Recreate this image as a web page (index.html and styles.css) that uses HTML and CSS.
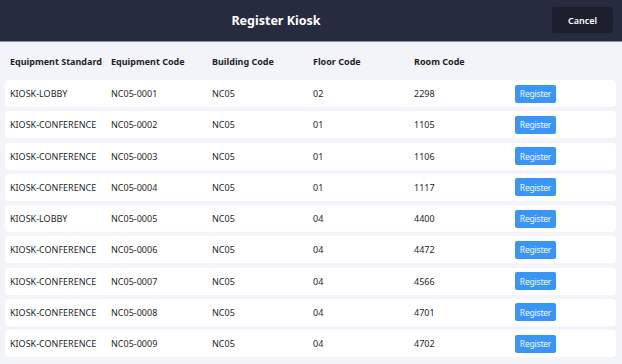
FILE: index.html
```html
<!DOCTYPE html>
<html lang="en">
<head>
  <meta charset="UTF-8">
  <title>Register Kiosk</title>
  <link rel="stylesheet" href="styles.css">
</head>
<body>
  <div class="topbar">
    <h3 class="title">Register Kiosk</h3>
    <button class="cancel-btn">Cancel</button>
  </div>
  <div class="content">
    <div class="head-row">
      <div class="cell">Equipment Standard</div>
      <div class="cell">Equipment Code</div>
      <div class="cell">Building Code</div>
      <div class="cell">Floor Code</div>
      <div class="cell">Room Code</div>
      <div class="cell"></div>
    </div>
    <div class="kiosk-row">
      <div class="cell">KIOSK-LOBBY</div>
      <div class="cell">NC05-0001</div>
      <div class="cell">NC05</div>
      <div class="cell">02</div>
      <div class="cell">2298</div>
      <div class="cell"><button class="register-btn">Register</button></div>
    </div>
    <div class="kiosk-row">
      <div class="cell">KIOSK-CONFERENCE</div>
      <div class="cell">NC05-0002</div>
      <div class="cell">NC05</div>
      <div class="cell">01</div>
      <div class="cell">1105</div>
      <div class="cell"><button class="register-btn">Register</button></div>
    </div>
    <div class="kiosk-row">
      <div class="cell">KIOSK-CONFERENCE</div>
      <div class="cell">NC05-0003</div>
      <div class="cell">NC05</div>
      <div class="cell">01</div>
      <div class="cell">1106</div>
      <div class="cell"><button class="register-btn">Register</button></div>
    </div>
    <div class="kiosk-row">
      <div class="cell">KIOSK-CONFERENCE</div>
      <div class="cell">NC05-0004</div>
      <div class="cell">NC05</div>
      <div class="cell">01</div>
      <div class="cell">1117</div>
      <div class="cell"><button class="register-btn">Register</button></div>
    </div>
    <div class="kiosk-row">
      <div class="cell">KIOSK-LOBBY</div>
      <div class="cell">NC05-0005</div>
      <div class="cell">NC05</div>
      <div class="cell">04</div>
      <div class="cell">4400</div>
      <div class="cell"><button class="register-btn">Register</button></div>
    </div>
    <div class="kiosk-row">
      <div class="cell">KIOSK-CONFERENCE</div>
      <div class="cell">NC05-0006</div>
      <div class="cell">NC05</div>
      <div class="cell">04</div>
      <div class="cell">4472</div>
      <div class="cell"><button class="register-btn">Register</button></div>
    </div>
    <div class="kiosk-row">
      <div class="cell">KIOSK-CONFERENCE</div>
      <div class="cell">NC05-0007</div>
      <div class="cell">NC05</div>
      <div class="cell">04</div>
      <div class="cell">4566</div>
      <div class="cell"><button class="register-btn">Register</button></div>
    </div>
    <div class="kiosk-row">
      <div class="cell">KIOSK-CONFERENCE</div>
      <div class="cell">NC05-0008</div>
      <div class="cell">NC05</div>
      <div class="cell">04</div>
      <div class="cell">4701</div>
      <div class="cell"><button class="register-btn">Register</button></div>
    </div>
    <div class="kiosk-row">
      <div class="cell">KIOSK-CONFERENCE</div>
      <div class="cell">NC05-0009</div>
      <div class="cell">NC05</div>
      <div class="cell">04</div>
      <div class="cell">4702</div>
      <div class="cell"><button class="register-btn">Register</button></div>
    </div>
  </div>
</body>
</html>
```

FILE: styles.css
```css
body {
  margin: 0;
  background-color: #f3f4f9;
  font-family: "Noto Sans", "Open Sans", sans-serif;
  color: #1d1f27;
}
.topbar {
  height: 41px;
  background-color: #272b3f;
  border-bottom: 1px solid #8e90a6;
  display: flex;
  align-items: center;
}
.title {
  flex: 1;
  margin: 0;
  text-align: center;
  color: #ffffff;
  font-size: 12.5px;
  font-weight: bold;
}
.cancel-btn {
  width: 61px;
  height: 26px;
  margin-right: 9px;
  margin-top: -1px;
  border: none;
  border-radius: 3px;
  background-color: #1c1f2d;
  color: #ffffff;
  font-family: "Noto Sans", sans-serif;
  font-size: 9px;
  font-weight: 600;
}
.content {
  padding: 0 6px 0 5px;
}
.head-row,
.kiosk-row {
  display: flex;
  align-items: center;
  padding-left: 5px;
}
.head-row {
  height: 38px;
  font-size: 9px;
  font-weight: bold;
}
.kiosk-row {
  height: 27px;
  margin-bottom: 4.25px;
  background-color: #ffffff;
  border-radius: 4px;
  font-size: 9px;
}
.cell {
  width: 101px;
  flex-shrink: 0;
}
.register-btn {
  width: 41px;
  height: 18px;
  padding: 0;
  border: none;
  border-radius: 2px;
  background-color: #3a96f6;
  color: #f4f8ff;
  font-family: "Noto Sans", sans-serif;
  font-size: 8.5px;
  letter-spacing: -0.2px;
}
```
